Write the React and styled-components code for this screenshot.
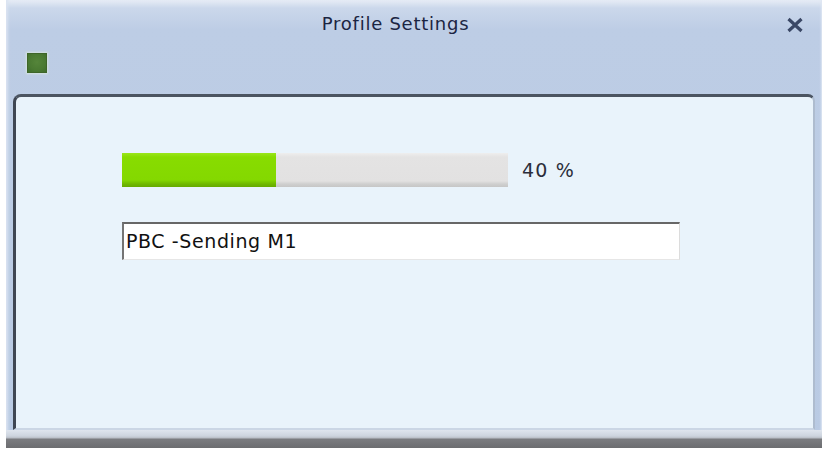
import React from 'react';
import styled, { createGlobalStyle } from 'styled-components';

const GlobalStyle = createGlobalStyle`
  html, body {
    margin: 0;
    padding: 0;
    background: #ffffff;
    font-family: "DejaVu Sans", Verdana, sans-serif;
  }
`;

const Window = styled.div`
  display: flex;
  flex-direction: column;
  width: 816px;
  height: 448px;
  margin-left: 6px;
  background: linear-gradient(
    to bottom,
    #e7edf6 0,
    #cbd8eb 8px,
    #bdcde5 30px,
    #b9cae3 100%
  );
  box-shadow: inset 3px 0 3px -1px #dbe4f1, inset -2px 0 2px -1px #dfe7f3;
`;

const TitleBar = styled.div`
  display: flex;
  flex-direction: column;
  height: 94px;
  flex: none;
  padding: 13px 17px 0 21px;
  box-sizing: border-box;
`;

const TitleRow = styled.div`
  display: flex;
  align-items: flex-start;
  margin-left: -21px;
`;

const Title = styled.h1`
  flex: 1;
  margin: 0;
  text-align: center;
  font-size: 18px;
  font-weight: normal;
  line-height: 22px;
  letter-spacing: 0.75px;
  color: #1b2542;
`;

const CloseButton = styled.button`
  display: flex;
  width: 20px;
  height: 16px;
  margin-top: 4px;
  padding: 0;
  border: none;
  background: none;
  cursor: pointer;
`;

const StatusIcon = styled.div`
  width: 20px;
  height: 20px;
  margin-top: 18px;
  box-sizing: border-box;
  background: radial-gradient(circle at 50% 45%, #55853a 0, #4a7a32 60%, #3f6c2b 100%);
  border: 1px solid #3e6629;
  box-shadow: 0 0 2px 1px rgba(230, 245, 220, 0.6);
`;

const Panel = styled.div`
  flex: 1;
  display: flex;
  flex-direction: column;
  margin: 0 7px;
  padding: 56px 0 0 106px;
  background: #e9f3fb;
  border-top: 3px solid #4b5461;
  border-left: 3px solid #3f4653;
  border-right: 2px solid #aebccf;
  border-bottom: 2px solid #cbd6e5;
  border-radius: 8px 7px 0 0;
`;

const ProgressRow = styled.div`
  display: flex;
  align-items: center;
  gap: 14px;
`;

const Track = styled.div`
  width: 386px;
  height: 34px;
  background: linear-gradient(to bottom, #eeeeee 0, #e4e3e3 4px, #e2e1e1 28px, #cfcfcf 31px, #c6c6c6 100%);
`;

const Fill = styled.div`
  width: ${(p) => p.$percent}%;
  height: 100%;
  background: linear-gradient(to bottom, #9ae61a 0, #88dc00 4px, #84d800 27px, #6fb800 31px, #66aa00 100%);
`;

const Percent = styled.span`
  font-size: 19px;
  letter-spacing: 1.2px;
  color: #2b2d3a;
`;

const StatusBox = styled.div`
  display: flex;
  align-items: center;
  width: 558px;
  height: 38px;
  margin-top: 35px;
  padding: 0 0 2px 2px;
  box-sizing: border-box;
  background: #ffffff;
  border-top: 2px solid #676767;
  border-left: 2px solid #747474;
  border-right: 1px solid #dcdcdc;
  border-bottom: 1px solid #e6e6e6;
  font-size: 19px;
  letter-spacing: 0.6px;
  color: #111111;
`;

const BottomFrame = styled.div`
  height: 18px;
  flex: none;
  background: linear-gradient(
    to bottom,
    #dfe5ee 0,
    #cdd4de 6px,
    #b9bec6 8px,
    #7b7c80 9px,
    #6c6d70 100%
  );
`;

const CloseIcon = () => (
  <svg width="20" height="16" viewBox="0 0 20 16">
    <path
      d="M3.5 2 L16.5 14 M16.5 2 L3.5 14"
      stroke="#3a4765"
      strokeWidth="3.2"
      strokeLinecap="butt"
      fill="none"
    />
  </svg>
);

const App = () => {
  const progress = 40;
  return (
    <>
      <GlobalStyle />
      <Window>
        <TitleBar>
          <TitleRow>
            <Title>Profile Settings</Title>
            <CloseButton aria-label="Close">
              <CloseIcon />
            </CloseButton>
          </TitleRow>
          <StatusIcon />
        </TitleBar>
        <Panel>
          <ProgressRow>
            <Track>
              <Fill $percent={progress} />
            </Track>
            <Percent>{progress} %</Percent>
          </ProgressRow>
          <StatusBox>PBC -Sending M1</StatusBox>
        </Panel>
        <BottomFrame />
      </Window>
    </>
  );
};

export default App;
